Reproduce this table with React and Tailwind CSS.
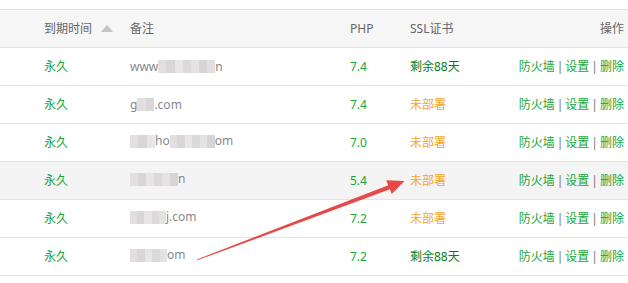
import React from 'react';

const rows = [
  { note: [['t', 'www'], ['b', 57], ['t', 'n']], php: '7.4', ssl: true },
  { note: [['t', 'g'], ['b', 17], ['t', '.com']], php: '7.4', ssl: false },
  { note: [['b', 25], ['t', 'ho'], ['b', 45], ['t', 'om']], php: '7.0', ssl: false },
  { note: [['b', 48], ['t', 'n']], php: '5.4', ssl: false, hover: true },
  { note: [['b', 36], ['t', 'j.com']], php: '7.2', ssl: false },
  { note: [['b', 37], ['t', 'om']], php: '7.2', ssl: true },
];

// pixelated blur stand-in for masked text
const Blur = ({ w }) => {
  const shades = ['#e3dfe0', '#d9d6d8', '#e8e5e6', '#dcd9db', '#e5e2e4', '#d6d4d6'];
  const cells = Math.max(2, Math.round(w / 8));
  return (
    <span className="inline-flex h-[13px] align-middle" style={{ width: w }}>
      {Array.from({ length: cells }).map((_, i) => (
        <span key={i} className="h-full flex-1" style={{ background: shades[i % shades.length] }} />
      ))}
    </span>
  );
};

const Note = ({ parts }) => (
  <span className="inline-flex items-center text-[#888]">
    {parts.map(([k, v], i) =>
      k === 't' ? <span key={i}>{v}</span> : <Blur key={i} w={v} />
    )}
  </span>
);

const cols = 'grid grid-cols-[130px_220px_60px_1fr_auto] items-center';

export default function App() {
  return (
    <div className="relative w-[628px] h-[283px] bg-white text-[12px] overflow-hidden" style={{ fontFamily: '"Noto Sans", "Noto Sans CJK SC", sans-serif' }}>
      <div className="pt-[9px]">
        <div className={`${cols} h-[39px] bg-[#f6f6f6] border-y border-[#e2e2e2] text-[#666]`}>
          <div className="pl-[44px] flex items-center">
            <span>到期时间</span>
            <span className="ml-[9px] w-0 h-0 border-x-[6px] border-x-transparent border-b-[7px] border-b-[#c4c4c4]" />
          </div>
          <div>备注</div>
          <div>PHP</div>
          <div>SSL证书</div>
          <div className="pr-[4px]">操作</div>
        </div>
        {rows.map((r, i) => (
          <div key={i} className={`${cols} h-[38px] border-b border-[#e4e4e4] ${r.hover ? 'bg-[#f4f4f4]' : ''}`}>
            <div className="pl-[44px] text-[#20a53a]">永久</div>
            <div><Note parts={r.note} /></div>
            <div className="text-[#20a53a]">{r.php}</div>
            <div className={r.ssl ? 'text-[#0b7d12]' : 'text-[#f5a623]'}>{r.ssl ? '剩余88天' : '未部署'}</div>
            <div className="pr-[4px] text-[#20a53a] whitespace-nowrap">
              防火墙<span className="text-[#777] mx-[2px]">|</span>设置<span className="text-[#777] mx-[2px]">|</span>删除
            </div>
          </div>
        ))}
      </div>
      <svg className="absolute inset-0 pointer-events-none" width="628" height="283">
        <polygon points="196.6,260.6 197.0,259.4 389.0,184.9 390.6,189.1" fill="#e84848" />
        <polygon points="404.5,181 386.2,180.2 391.8,194" fill="#e84848" />
      </svg>
    </div>
  );
}
